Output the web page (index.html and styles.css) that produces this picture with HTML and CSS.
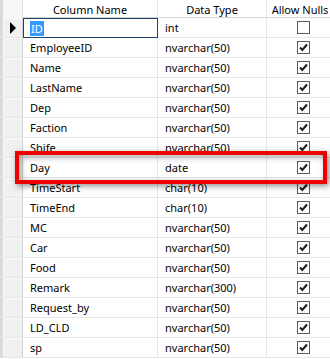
FILE: index.html
```html
<!DOCTYPE html>
<html lang="en">
<head>
    <meta charset="UTF-8">
    <title>Table Design</title>
    <link rel="stylesheet" href="styles.css">
</head>
<body>
    <div class="grid">
        <div class="row head">
            <div class="sel"></div>
            <div class="cell">Column Name</div>
            <div class="cell">Data Type</div>
            <div class="cell">Allow Nulls</div>
        </div>
        <div class="row current">
            <div class="sel"><span class="arrow"></span></div>
            <div class="cell name"><span class="editing">ID</span></div>
            <div class="cell">int</div>
            <div class="cell chk"><span class="box"></span></div>
        </div>
        <div class="row"><div class="sel"></div><div class="cell">EmployeeID</div><div class="cell">nvarchar(50)</div><div class="cell chk"><span class="box on"></span></div></div>
        <div class="row"><div class="sel"></div><div class="cell">Name</div><div class="cell">nvarchar(50)</div><div class="cell chk"><span class="box on"></span></div></div>
        <div class="row"><div class="sel"></div><div class="cell">LastName</div><div class="cell">nvarchar(50)</div><div class="cell chk"><span class="box on"></span></div></div>
        <div class="row"><div class="sel"></div><div class="cell">Dep</div><div class="cell">nvarchar(50)</div><div class="cell chk"><span class="box on"></span></div></div>
        <div class="row"><div class="sel"></div><div class="cell">Faction</div><div class="cell">nvarchar(50)</div><div class="cell chk"><span class="box on"></span></div></div>
        <div class="row"><div class="sel"></div><div class="cell">Shife</div><div class="cell">nvarchar(50)</div><div class="cell chk"><span class="box on"></span></div></div>
        <div class="row"><div class="sel"></div><div class="cell">Day</div><div class="cell">date</div><div class="cell chk"><span class="box on"></span></div></div>
        <div class="row"><div class="sel"></div><div class="cell">TimeStart</div><div class="cell">char(10)</div><div class="cell chk"><span class="box on"></span></div></div>
        <div class="row"><div class="sel"></div><div class="cell">TimeEnd</div><div class="cell">char(10)</div><div class="cell chk"><span class="box on"></span></div></div>
        <div class="row"><div class="sel"></div><div class="cell">MC</div><div class="cell">nvarchar(50)</div><div class="cell chk"><span class="box on"></span></div></div>
        <div class="row"><div class="sel"></div><div class="cell">Car</div><div class="cell">nvarchar(50)</div><div class="cell chk"><span class="box on"></span></div></div>
        <div class="row"><div class="sel"></div><div class="cell">Food</div><div class="cell">nvarchar(50)</div><div class="cell chk"><span class="box on"></span></div></div>
        <div class="row"><div class="sel"></div><div class="cell">Remark</div><div class="cell">nvarchar(300)</div><div class="cell chk"><span class="box on"></span></div></div>
        <div class="row"><div class="sel"></div><div class="cell">Request_by</div><div class="cell">nvarchar(50)</div><div class="cell chk"><span class="box on"></span></div></div>
        <div class="row"><div class="sel"></div><div class="cell">LD_CLD</div><div class="cell">nvarchar(50)</div><div class="cell chk"><span class="box on"></span></div></div>
        <div class="row"><div class="sel"></div><div class="cell">sp</div><div class="cell">nvarchar(50)</div><div class="cell chk"><span class="box on"></span></div></div>

        <div class="highlight"></div>
    </div>
</body>
</html>
```

FILE: styles.css
```css
* { margin: 0; padding: 0; box-sizing: border-box; }
body { background: #ffffff; font-family: "Noto Sans", "Open Sans", sans-serif; font-size: 11px; color: #000; }

.grid { position: relative; width: 330px; height: 359px; overflow: hidden; background: #fff; }

.row { display: grid; grid-template-columns: 23px 135px 109px 63px; height: 20px; border-bottom: 1px solid #e6e6e6; }
.row .cell { display: flex; align-items: center; padding-left: 7px; border-right: 1px solid #e6e6e6; white-space: nowrap; line-height: 19px; }
.row .cell:last-child { border-right: none; }

.sel { background: #f0f0f0; border-left: 3px solid #dadada; border-right: 1px solid #d0d0d0; box-shadow: inset 1px 1px 0 #fafafa; display: flex; align-items: center; justify-content: center; }

.head { height: 18px; border-bottom: 1px solid #d5d5d5; background: #fff; }
.head .cell { justify-content: center; padding-left: 0; border-right: 1px solid #e5e5e5; color: #000; }
.head .cell:last-child { padding-left: 3px; }
.head .sel { background: #f6f6f6; box-shadow: none; border-right: 1px solid #e0e0e0; }

.arrow { width: 0; height: 0; border-top: 6px solid transparent; border-bottom: 6px solid transparent; border-left: 6px solid #000; }

.current .name { border: 1px solid #1e3f66; padding-left: 6px; margin-bottom: -1px; }
.editing { background: #3399ff; color: #fff; line-height: 15px; padding: 0 1px; }

.chk { justify-content: center; padding-left: 0 !important; }
.box { width: 13px; height: 13px; border: 1px solid #5b5b5b; background: #fff; margin-left: 10px; }
.box.on { background: #fff url("data:image/svg+xml,%3Csvg xmlns='http://www.w3.org/2000/svg' width='11' height='11' viewBox='0 0 11 11'%3E%3Cpath d='M2 5.5 L4.3 8 L9 2.5' fill='none' stroke='%23222' stroke-width='2.1'/%3E%3C/svg%3E") no-repeat center; }

.highlight { position: absolute; left: 15px; top: 151px; width: 312px; height: 33px; border: 4px solid #ee0000; box-shadow: 2px 2px 6px rgba(0, 0, 0, 0.45), inset 2px 2px 6px rgba(0, 0, 0, 0.35); }
```
